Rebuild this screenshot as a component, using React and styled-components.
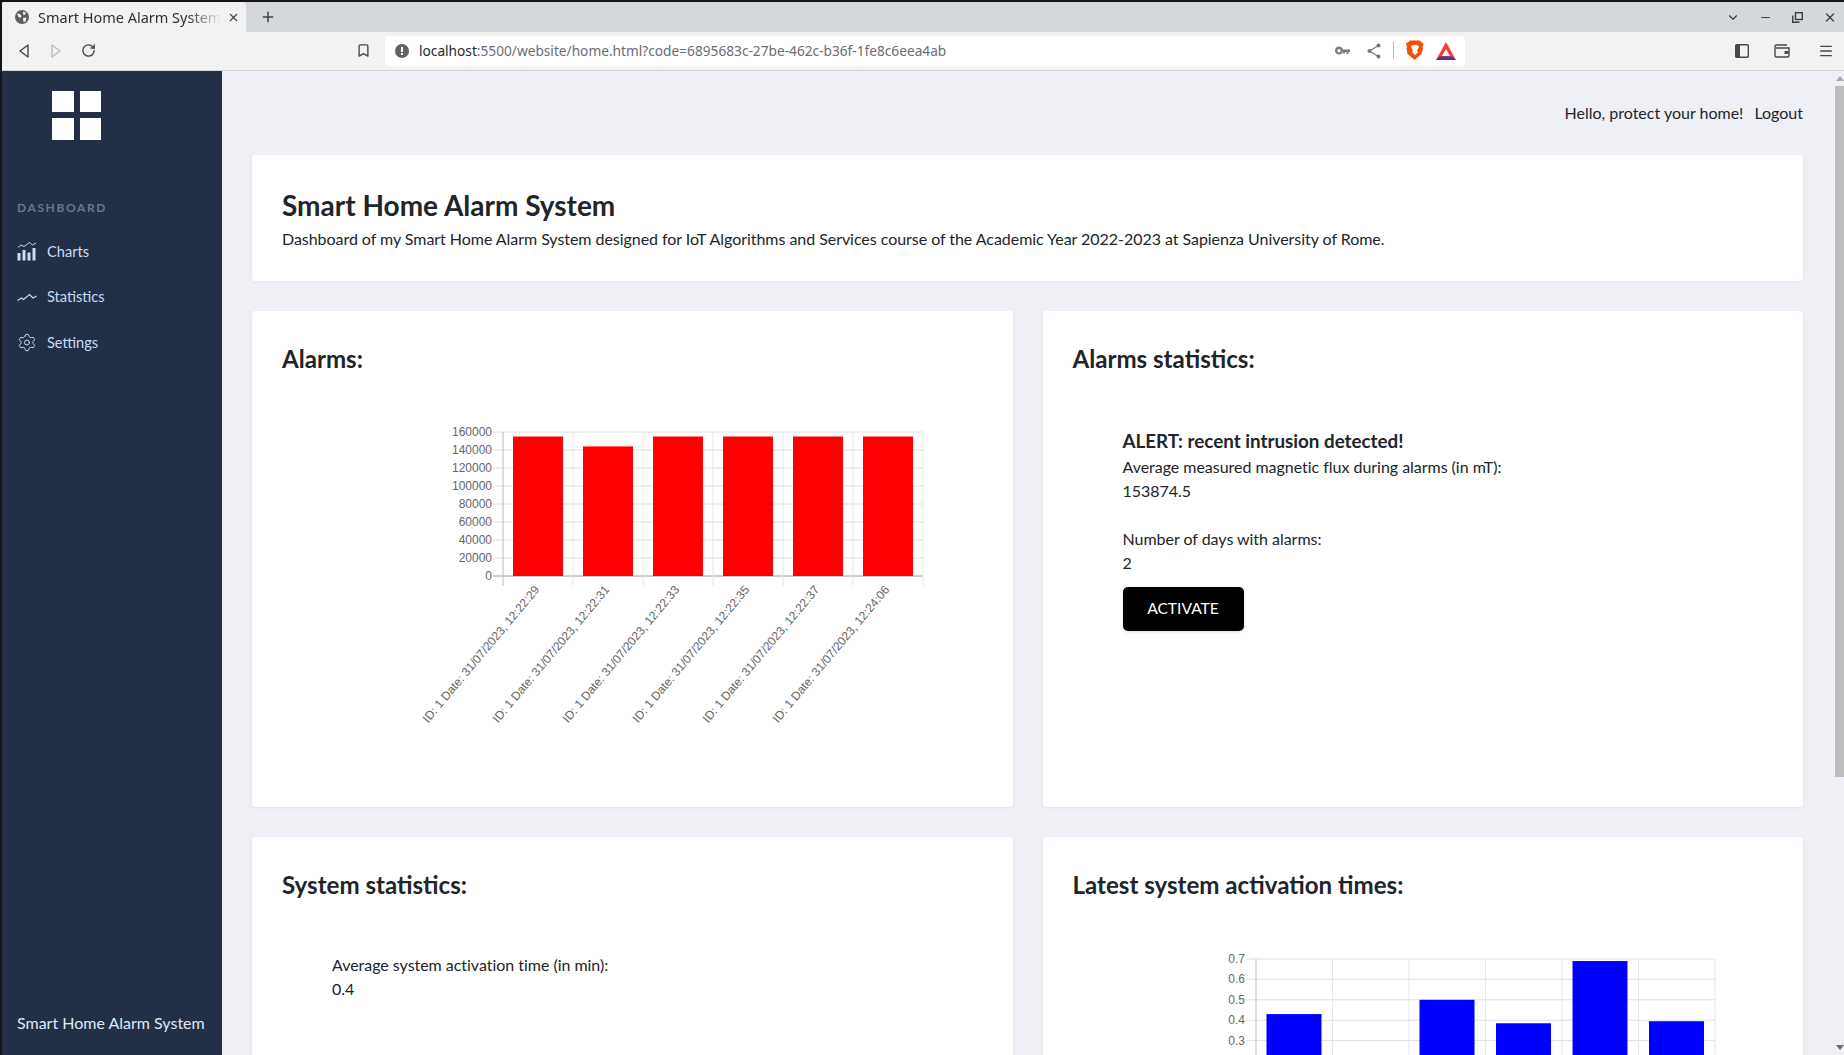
import React from 'react';
import styled, { createGlobalStyle } from 'styled-components';
import { Settings, X, Plus, ChevronDown, RotateCw, Bookmark, Minus, Menu } from 'lucide-react';

const GlobalStyle = createGlobalStyle`
  * { box-sizing: border-box; }
  html, body { margin: 0; height: 100%; overflow: hidden; }
  body { font-family: Lato, "Liberation Sans", sans-serif; color: #212529; background: #eff0f5; }
  h1, h2, h3, p { margin: 0; }
`

const Window = styled.div`
  background: #17131a;
  display: flex;
  flex-direction: column;
  height: 100vh;
  overflow: hidden;
  padding: 2px 0 0 2px;
`

const TabStrip = styled.div`
  align-items: stretch;
  background: #d5d8db;
  color: #3b3e42;
  display: flex;
  flex: 0 0 30px;
  font-family: "Noto Sans", sans-serif;
`

const Tab = styled.div`
  align-items: center;
  background: #f2f2f2;
  border-radius: 4px 4px 0 0;
  display: flex;
  font-size: 14.5px;
  padding-left: 4px;
  width: 244px;
`

const TabIcon = styled.svg`
  flex: none;
  height: 14px;
  margin-left: 9px;
  width: 14px;
`

const TabTitle = styled.span`
  color: #2e3033;
  margin-left: 9px;
  -webkit-mask-image: linear-gradient(to right, #000 82%, transparent 100%);
  mask-image: linear-gradient(to right, #000 82%, transparent 100%);
  overflow: hidden;
  white-space: nowrap;
  width: 183px;
`

const TabClose = styled.span`
  align-items: center;
  display: flex;
  margin-left: 6px;
`

const NewTab = styled.span`
  align-items: center;
  display: flex;
  margin-left: 14px;
`

const WindowControls = styled.div`
  align-items: center;
  display: flex;
  gap: 18.5px;
  margin-left: auto;
  padding-right: 7px;
`

const WindowGlyph = styled.span`
  align-items: center;
  display: flex;
  height: 16px;
  justify-content: center;
  width: 14px;
`

const Toolbar = styled.div`
  align-items: center;
  background: #f2f2f2;
  border-bottom: 1px solid #d3d5d8;
  display: flex;
  flex: 0 0 39px;
  padding: 0 2px 1px 6px;
`

const ToolButton = styled.span`
  align-items: center;
  color: ${props => props.$muted ? '#b9bbbe' : '#45484d'};
  display: flex;
  flex: none;
  height: 28px;
  justify-content: center;
  margin-left: ${props => props.$left || 0}px;
  width: 32px;
`

const Omnibox = styled.div`
  align-items: center;
  background: #ffffff;
  border-radius: 4px;
  display: flex;
  flex: 0 0 1080px;
  font-family: "Noto Sans", sans-serif;
  font-size: 13.7px;
  height: 30px;
  margin-left: 6px;
  padding: 0 9px 0 10px;
`

const Url = styled.span`
  color: #6a6d72;
  margin-left: 10px;
  white-space: nowrap;

  & b {
    color: #26282b;
    font-weight: normal;
  }
`

const OmniboxIcons = styled.div`
  align-items: center;
  color: #75777b;
  display: flex;
  gap: 12px;
  margin-left: auto;
`

const KeySlot = styled.span`
  display: flex;
  margin-right: 5px;
`

const Separator = styled.span`
  background: #b8babd;
  height: 17px;
  width: 1px;
`

const ToolbarEnd = styled.div`
  display: flex;
  gap: 8px;
  margin-left: auto;
`

const Body = styled.div`
  display: flex;
  flex: 1;
  min-height: 0;
`

const Sidebar = styled.aside`
  background: #232f45;
  display: flex;
  flex: 0 0 220px;
  flex-direction: column;
  padding: 20px 0 20px 15px;
`

const Logo = styled.div`
  display: grid;
  gap: 6px;
  grid-template-columns: 22px 21px;
  grid-template-rows: 21px 22px;
  margin-left: 35px;

  & span {
    background: #ffffff;
  }
`

const SectionLabel = styled.div`
  color: #69778f;
  font-size: 12px;
  font-weight: 700;
  letter-spacing: 1.6px;
  margin-top: 60px;
`

const Nav = styled.nav`
  display: flex;
  flex-direction: column;
  gap: 18.5px;
  margin-top: 22.5px;
`

const NavItem = styled.a`
  align-items: center;
  color: #c8dcf2;
  display: flex;
  font-size: 14.6px;
  gap: 10px;
  height: 27px;
`

const NavIcon = styled.span`
  align-items: center;
  display: flex;
  height: 20px;
  justify-content: center;
  width: 20px;
`

const SidebarFooter = styled.div`
  color: #dfe9f5;
  font-size: 16px;
  line-height: 24px;
  margin-top: auto;
`

const Main = styled.main`
  background: #eff0f5;
  flex: 1;
  min-width: 0;
  overflow: hidden;
  padding: 30px 32px 0 30px;
`

const TopBar = styled.div`
  display: flex;
  font-size: 16px;
  gap: 11px;
  height: 54px;
  justify-content: flex-end;
  line-height: 24px;
`

const Card = styled.section`
  background: #ffffff;
  border-radius: 3px;
  box-shadow: 0 1px 3px rgba(40, 50, 70, 0.06);
  height: ${props => props.$height}px;
  padding: 30px;
`

const HeroCard = styled(Card)`
  padding-top: 33px;
`

const Title = styled.h1`
  font-size: 28px;
  font-weight: 700;
  line-height: 34px;
`

const Description = styled.p`
  font-size: 16px;
  letter-spacing: -0.045px;
  line-height: 24px;
  margin-top: 5px;
`

const CardGrid = styled.div`
  display: grid;
  gap: 30px;
  grid-template-columns: 760.5px 760.5px;
  margin-top: 30px;
`

const CardTitle = styled.h2`
  font-size: 24.1px;
  font-weight: 700;
  line-height: 36px;
`

const ChartSvg = styled.svg`
  display: block;
  margin-left: ${props => props.$left}px;
  margin-top: ${props => props.$top}px;
  overflow: visible;
`

const StatBlock = styled.div`
  font-size: 16px;
  letter-spacing: -0.03px;
  line-height: 24px;
  margin: ${props => props.$top}px 0 0 50px;
`

const AlertTitle = styled.h3`
  font-size: 18.8px;
  font-weight: 700;
  letter-spacing: 0;
  line-height: 24px;
  margin-bottom: 2px;
`

const StatLabel = styled.p`
  margin-top: ${props => props.$gap || 0}px;
`

const ActivateButton = styled.button`
  background: #000000;
  border: none;
  border-radius: 5px;
  box-shadow: 0 1px 3px rgba(0, 0, 0, 0.15);
  color: #ffffff;
  display: block;
  font-family: Lato, sans-serif;
  font-size: 15.6px;
  height: 44px;
  margin-top: 12px;
  padding: 0 0 3px;
  width: 121px;
`

const ScrollTrack = styled.div`
  background: #eff0f5;
  display: flex;
  flex: 0 0 9px;
  flex-direction: column;
  padding-top: 5px;
`

const ScrollArrow = styled.span`
  border-left: 4px solid transparent;
  border-right: 4px solid transparent;
  ${props => props.$down ? 'border-top: 5px solid #6e6e6e; margin-top: auto; margin-bottom: 5px;' : 'border-bottom: 5px solid #a8a8a8;'}
  height: 0;
  margin-left: 1px;
  width: 0;
`

const ScrollThumb = styled.span`
  background: #bdbdbd;
  height: 691px;
  margin-top: 5px;
`

const alarmBars = [
  { label: 'ID: 1 Date: 31/07/2023, 12:22:29', value: 155000 },
  { label: 'ID: 1 Date: 31/07/2023, 12:22:31', value: 144000 },
  { label: 'ID: 1 Date: 31/07/2023, 12:22:33', value: 155000 },
  { label: 'ID: 1 Date: 31/07/2023, 12:22:35', value: 155000 },
  { label: 'ID: 1 Date: 31/07/2023, 12:22:37', value: 155000 },
  { label: 'ID: 1 Date: 31/07/2023, 12:24:06', value: 155000 },
]

// activation chart is cut by the window, only its upper part is drawn
const activationBars = [0.43, 0.1, 0.5, 0.385, 0.69, 0.395]
const activationTicks = ['0.7', '0.6', '0.5', '0.4', '0.3']

function AlarmChart() {
  const left = 83, top = 14, step = 70, tick = 18
  const bottom = top + tick * 8
  const scale = v => bottom - (v / 160000) * (tick * 8)
  const ticks = [160000, 140000, 120000, 100000, 80000, 60000, 40000, 20000, 0]
  return (
    <ChartSvg $left={138} $top={41} width="520" height="330" viewBox="0 0 520 330">
      {ticks.map((t, i) => (
        <g key={t}>
          <line x1={left - 10} x2={left + step * 6} y1={top + i * tick} y2={top + i * tick} stroke={t === 0 ? '#a0a0a0' : '#e0e0e0'} />
          <text x={left - 11} y={top + i * tick + 4} textAnchor="end" fontFamily="Liberation Sans" fontSize="12" fill="#666">{t}</text>
        </g>
      ))}
      {[0, 1, 2, 3, 4, 5, 6].map(i => (
        <line key={i} x1={left + i * step} x2={left + i * step} y1={top} y2={bottom + 10} stroke={i === 0 ? '#bcbcbc' : '#e8e8e8'} />
      ))}
      {alarmBars.map((b, i) => (
        <g key={b.label}>
          <rect x={left + i * step + 10} y={scale(b.value)} width="50" height={bottom - scale(b.value)} fill="#ff0000" />
          <text
            transform={`translate(${left + i * step + 37} ${bottom + 14}) rotate(-50)`}
            textAnchor="end"
            fontFamily="Liberation Sans"
            fontSize="12"
            fill="#666"
          >{b.label}</text>
        </g>
      ))}
    </ChartSvg>
  )
}

function ActivationChart() {
  const left = 66, top = 6, step = 76.5, tick = 20.4
  const bottom = top + tick * 7
  const scale = v => top + ((0.7 - v) / 0.1) * tick
  const gridTicks = [0, 1, 2, 3, 4, 5, 6]
  return (
    <ChartSvg $left={117} $top={50} width="480" height="160" viewBox="0 0 480 160">
      {gridTicks.map(i => (
        <line key={i} x1={left - 10} x2={left + step * 6} y1={top + i * tick} y2={top + i * tick} stroke="#e0e0e0" />
      ))}
      {activationTicks.map((t, i) => (
        <text key={t} x={left - 11} y={top + i * tick + 4} textAnchor="end" fontFamily="Liberation Sans" fontSize="12" fill="#666">{t}</text>
      ))}
      {gridTicks.map(i => (
        <line key={i} x1={left + i * step} x2={left + i * step} y1={top} y2={bottom} stroke={i === 0 ? '#bcbcbc' : '#e8e8e8'} />
      ))}
      {activationBars.map((v, i) => (
        <rect key={i} x={left + i * step + 10.5} y={scale(v)} width="55" height={bottom - scale(v)} fill="#0000ff" />
      ))}
    </ChartSvg>
  )
}

const ChartsIcon = () => (
  <svg width="20" height="20" viewBox="0 0 20 20" fill="none" stroke="#c8dcf2">
    <path d="M1 6.500l3-2.500 3 1.500 5.500-4 3 2.500 3.500-2" strokeWidth="1" />
    <g fill="#c8dcf2" stroke="none">
      <rect x="0.500" y="12" width="3" height="7.500" />
      <rect x="5.500" y="9" width="3" height="10.500" />
      <rect x="10.500" y="11.500" width="3" height="8" />
      <rect x="15.500" y="7" width="3" height="12.500" />
    </g>
  </svg>
)

const TrendIcon = () => (
  <svg width="20" height="20" viewBox="0 0 20 20" fill="none" stroke="#c8dcf2" strokeWidth="1.200">
    <path d="M0.500 13.500l4-2.500 2 1.500 6-5 3.500 3.500 3.500-2" />
  </svg>
)

const BraveIcon = () => (
  <svg width="18" height="21" viewBox="0 0 18 21">
    <path d="M4 0.500h10l1.500 2 2 .5-.5 3-.5 1 .5 1.500-1.500 5.500-3 2.500-3.500 3-.5.5-.5-.5-3.500-3-3-2.500L0.500 8.500l.5-1.500-.5-1-.5-3 2-.5z" fill="#f1500f" />
    <path d="M5 6l2.500-1h3L13 6l-1 3-1 1.500 1 1.500-3 3-3-3 1-1.500L6 9z" fill="#ffffff" />
  </svg>
)

const BatIcon = () => (
  <svg width="20" height="18" viewBox="0 0 20 18">
    <path d="M10 0L20 18H0z" fill="#f0402f" />
    <path d="M0 18l3.500-3.500h13L20 18z" fill="#662d91" />
    <path d="M10 7l4 7H6z" fill="#ffffff" />
  </svg>
)

const GlobeIcon = () => (
  <TabIcon viewBox="0 0 14 14">
    <circle cx="7" cy="7" r="7" fill="#5a5d62" />
    <path d="M2 3.500l3 .5 1.500 2-1 2-2-1zM8 1.500l3 1-1 2.500-2-.5zM8 8l3.500-.5-1 4-2 .5z" fill="#f2f2f2" />
  </TabIcon>
)

const BackIcon = ({ flip }) => (
  <svg width="14" height="16" viewBox="0 0 14 16" fill="none" stroke="currentColor" strokeWidth="1.400" strokeLinejoin="round" style={flip ? { transform: 'scaleX(-1)' } : undefined}>
    <path d="M11 2v12L3 8z" />
  </svg>
)

const InfoIcon = () => (
  <svg width="14" height="14" viewBox="0 0 14 14">
    <circle cx="7" cy="7" r="7" fill="#5f6368" />
    <rect x="6" y="3" width="2" height="5" fill="#fff" />
    <rect x="6" y="9" width="2" height="2" fill="#fff" />
  </svg>
)

const KeyIcon = () => (
  <svg width="15" height="10" viewBox="0 0 15 10" fill="#75777b">
    <path d="M4 0.500a4 4 0 0 1 3.800 3H15v2.500h-1.500V8h-2V6H10v1.500H8V6h-.2A4 4 0 1 1 4 .500zm0 2.500a1.700 1.700 0 1 0 0 3.400A1.700 1.700 0 0 0 4 3z" fillRule="evenodd" />
  </svg>
)

const ShareIcon = () => (
  <svg width="14" height="16" viewBox="0 0 14 16" fill="#75777b" stroke="#75777b">
    <path d="M11.500 2.500L2.500 8l9 5.500" fill="none" strokeWidth="1.300" />
    <circle cx="11.500" cy="2.500" r="2" stroke="none" />
    <circle cx="2.500" cy="8" r="2" stroke="none" />
    <circle cx="11.500" cy="13.500" r="2" stroke="none" />
  </svg>
)

const PanelIcon = () => (
  <svg width="14" height="14" viewBox="0 0 14 14" fill="none" stroke="#45484d" strokeWidth="1.400">
    <rect x="0.700" y="0.700" width="12.600" height="12.600" rx="1" />
    <rect x="1" y="1" width="4" height="12" fill="#45484d" stroke="none" />
  </svg>
)

const WalletIcon = () => (
  <svg width="16" height="14" viewBox="0 0 16 14" fill="none" stroke="#45484d" strokeWidth="1.400">
    <path d="M13 1H2.500A1.500 1.500 0 0 0 1 2.500v9A1.500 1.500 0 0 0 2.500 13h11a1.500 1.500 0 0 0 1.500-1.500V4H2" />
    <rect x="10.500" y="7" width="4" height="3" fill="#45484d" stroke="none" />
  </svg>
)

const RestoreIcon = () => (
  <svg width="11" height="11" viewBox="0 0 11 11" fill="none" stroke="#3b3e42" strokeWidth="1.400">
    <rect x="3.500" y="0.700" width="6.800" height="6.800" />
    <path d="M0.700 3.500v6.800h6.800" />
  </svg>
)

function App() {
  return (
    <Window>
      <GlobalStyle />
      <TabStrip>
        <Tab>
          <GlobeIcon />
          <TabTitle>Smart Home Alarm System</TabTitle>
          <TabClose><X size={13} /></TabClose>
        </Tab>
        <NewTab><Plus size={16} strokeWidth={2.2} /></NewTab>
        <WindowControls>
          <WindowGlyph><ChevronDown size={15} strokeWidth={2} /></WindowGlyph>
          <WindowGlyph><Minus size={13} strokeWidth={2} /></WindowGlyph>
          <WindowGlyph><RestoreIcon /></WindowGlyph>
          <WindowGlyph><X size={15} strokeWidth={2.2} /></WindowGlyph>
        </WindowControls>
      </TabStrip>
      <Toolbar>
        <ToolButton><BackIcon /></ToolButton>
        <ToolButton $muted><BackIcon flip /></ToolButton>
        <ToolButton><RotateCw size={15} strokeWidth={2.2} /></ToolButton>
        <ToolButton $left={243}><Bookmark size={15} strokeWidth={2.2} /></ToolButton>
        <Omnibox>
          <InfoIcon />
          <Url><b>localhost</b>:5500/website/home.html?code=6895683c-27be-462c-b36f-1fe8c6eea4ab</Url>
          <OmniboxIcons>
            <KeySlot><KeyIcon /></KeySlot>
            <ShareIcon />
            <Separator />
            <BraveIcon />
            <BatIcon />
          </OmniboxIcons>
        </Omnibox>
        <ToolbarEnd>
          <ToolButton><PanelIcon /></ToolButton>
          <ToolButton><WalletIcon /></ToolButton>
          <ToolButton $left={4}><Menu size={16} strokeWidth={2} /></ToolButton>
        </ToolbarEnd>
      </Toolbar>
      <Body>
        <Sidebar>
          <Logo><span /><span /><span /><span /></Logo>
          <SectionLabel>DASHBOARD</SectionLabel>
          <Nav>
            <NavItem><NavIcon><ChartsIcon /></NavIcon>Charts</NavItem>
            <NavItem><NavIcon><TrendIcon /></NavIcon>Statistics</NavItem>
            <NavItem><NavIcon><Settings size={21} strokeWidth={1.2} /></NavIcon>Settings</NavItem>
          </Nav>
          <SidebarFooter>Smart Home Alarm System</SidebarFooter>
        </Sidebar>
        <Main>
          <TopBar>
            <span>Hello, protect your home!</span>
            <span>Logout</span>
          </TopBar>
          <HeroCard $height={126}>
            <Title>Smart Home Alarm System</Title>
            <Description>Dashboard of my Smart Home Alarm System designed for IoT Algorithms and Services course of the Academic Year 2022-2023 at Sapienza University of Rome.</Description>
          </HeroCard>
          <CardGrid>
            <Card $height={496}>
              <CardTitle>Alarms:</CardTitle>
              <AlarmChart />
            </Card>
            <Card $height={496}>
              <CardTitle>Alarms statistics:</CardTitle>
              <StatBlock $top={52}>
                <AlertTitle>ALERT: recent intrusion detected!</AlertTitle>
                <StatLabel>Average measured magnetic flux during alarms (in mT):</StatLabel>
                <StatLabel>153874.5</StatLabel>
                <StatLabel $gap={24}>Number of days with alarms:</StatLabel>
                <StatLabel>2</StatLabel>
                <ActivateButton>ACTIVATE</ActivateButton>
              </StatBlock>
            </Card>
            <Card $height={496}>
              <CardTitle>System statistics:</CardTitle>
              <StatBlock $top={49.5}>
                <StatLabel>Average system activation time (in min):</StatLabel>
                <StatLabel>0.4</StatLabel>
              </StatBlock>
            </Card>
            <Card $height={496}>
              <CardTitle>Latest system activation times:</CardTitle>
              <ActivationChart />
            </Card>
          </CardGrid>
        </Main>
        <ScrollTrack>
          <ScrollArrow />
          <ScrollThumb />
          <ScrollArrow $down />
        </ScrollTrack>
      </Body>
    </Window>
  )
}

export default App
